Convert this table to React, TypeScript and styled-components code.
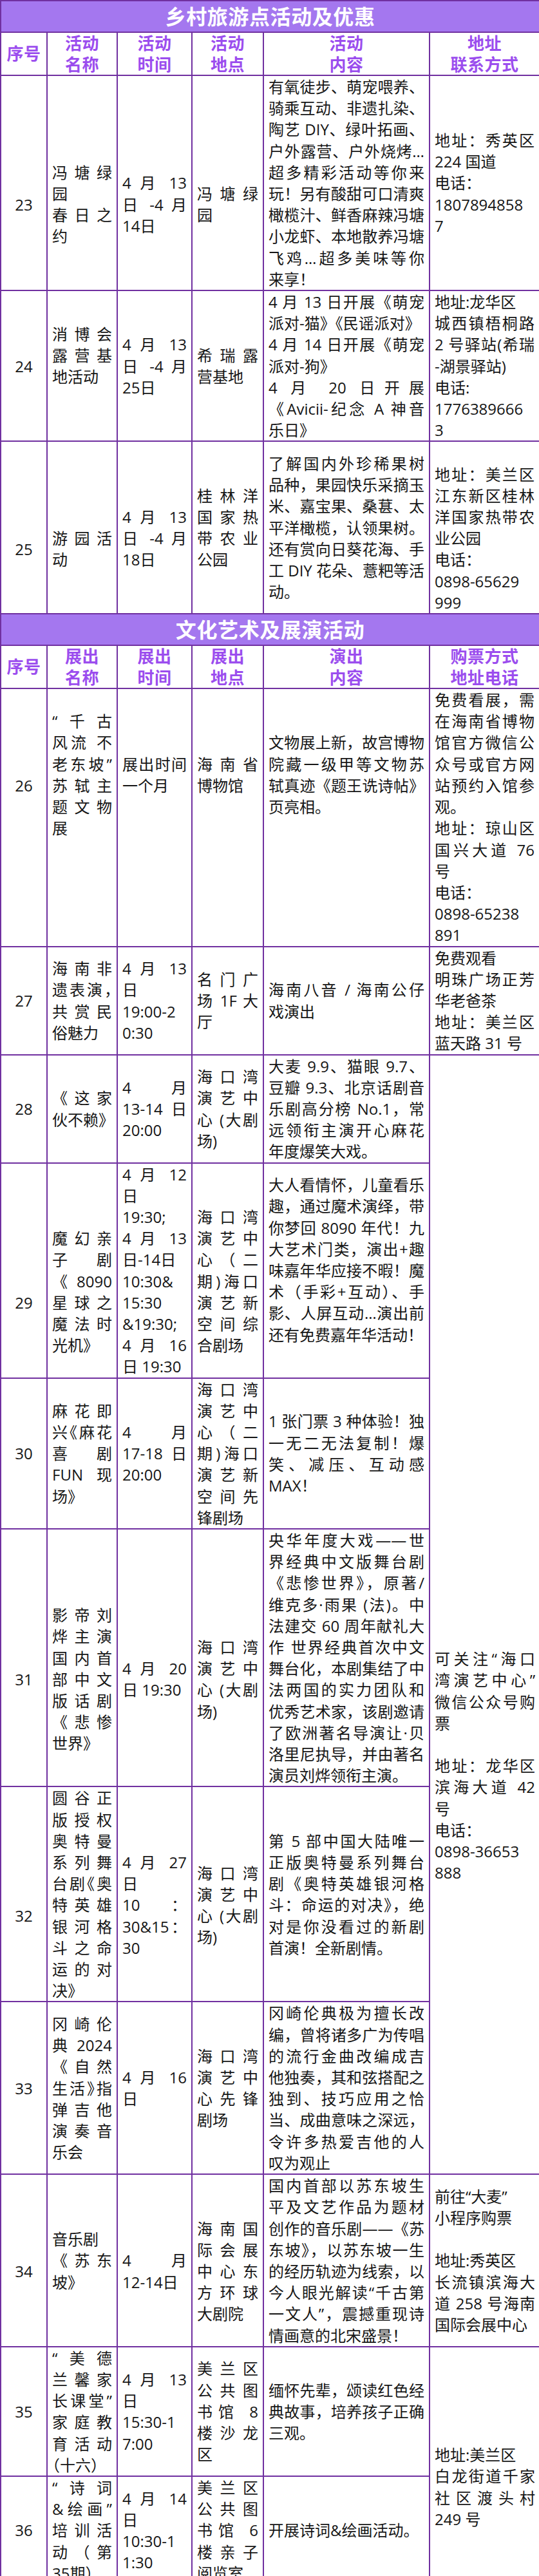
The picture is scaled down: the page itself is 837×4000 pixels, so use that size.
import React from "react";
import styled, { createGlobalStyle } from "styled-components";

// one text line = 33.2px; "\n" starts a new paragraph, "|" is a soft wrap (justified line),
// a leading "~" squeezes the punctuation of that line to half width
const LINE = 33.2;
const COLS = [72, 109, 116, 111, 258, 171];

type CellData = { text: string; span?: number; openRight?: boolean; openTop?: boolean };
type RowData = (string | CellData)[];

const GlobalStyle = createGlobalStyle`
  html, body {
    margin: 0;
    padding: 0;
    background: #fff;
  }
  body {
    font-family: "Open Sans", "Noto Sans CJK SC", sans-serif;
    color: #161616;
  }
`;

const Sheet = styled.table`
  width: 837px;
  border-collapse: collapse;
  table-layout: fixed;
  font-size: 24px;
  line-height: ${LINE}px;
`;

const Col = styled.col<{ $w: number }>`
  width: ${(p) => p.$w}px;
`;

const TitleCell = styled.th`
  height: 47px;
  padding: 0;
  background: #a477ef;
  border: 2px solid #7030a0;
  color: #fff;
  font-size: 32px;
  font-weight: 700;
  line-height: 47px;
  letter-spacing: 0.6px;
  text-align: center;
`;

const HeadCell = styled.th`
  padding: 0;
  border: 2px solid #7030a0;
  color: #9b4dee;
  font-size: 26px;
  font-weight: 700;
  line-height: 32.5px;
  letter-spacing: 0.5px;
  text-align: center;
  vertical-align: middle;
`;

const HeadLine = styled.div`
  white-space: nowrap;
`;

const Cell = styled.td<{ $center?: boolean; $openRight?: boolean; $openTop?: boolean }>`
  padding: 0 7px;
  border: 2px solid #7030a0;
  border-right-style: ${(p) => (p.$openRight ? "hidden" : "solid")};
  border-top-style: ${(p) => (p.$openTop ? "hidden" : "solid")};
  text-align: ${(p) => (p.$center ? "center" : "left")};
  vertical-align: middle;
`;

const Line = styled.div<{ $justify: boolean; $tight: boolean }>`
  min-height: ${LINE}px;
  text-align: ${(p) => (p.$justify ? "justify" : "inherit")};
  text-align-last: ${(p) => (p.$justify ? "justify" : "auto")};
  font-feature-settings: ${(p) => (p.$tight ? '"halt"' : "normal")};
`;

const Lines: React.FC<{ text: string }> = ({ text }) => (
  <>
    {text.split("\n").flatMap((para, i) => {
      const parts = para.split("|");
      return parts.map((raw, j) => {
        const tight = raw.startsWith("~");
        const line = tight ? raw.slice(1) : raw;
        return (
          <Line key={`${i}-${j}`} $justify={j < parts.length - 1} $tight={tight}>
            {line || "\u00a0"}
          </Line>
        );
      });
    })}
  </>
);

const ruralHeads = ["序号", "活动\n名称", "活动\n时间", "活动\n地点", "活动\n内容", "地址\n联系方式"];
const cultureHeads = ["序号", "展出\n名称", "展出\n时间", "展出\n地点", "演出\n内容", "购票方式\n地址电话"];

const ruralRows: RowData[] = [
  [
    "\n\n23",
    "\n\n冯塘绿|园\n春日之|约",
    "\n\n4 月 13|日 -4 月|14日",
    "\n\n冯塘绿|园",
    "有氧徒步、萌宠喂养、|骑乘互动、非遗扎染、|陶艺 DIY、绿叶拓画、|户外露营、户外烧烤…|超多精彩活动等你来|玩！另有酸甜可口清爽|橄榄汁、鲜香麻辣冯塘|小龙虾、本地散养冯塘|飞鸡…超多美味等你|来享！",
    "地址：秀英区|224 国道\n电话：\n1807894858|7",
  ],
  [
    "24",
    "消博会|露营基|地活动\n",
    "4 月 13|日 -4 月|25日",
    "希瑞露|营基地",
    "4 月 13 日开展《萌宠|派对-猫》《民谣派对》\n4 月 14 日开展《萌宠|派对-狗》\n4 月 20 日开展|《Avicii-纪念 A 神音|乐日》",
    "地址:龙华区\n城西镇梧桐路|2 号驿站(希瑞|-湖景驿站)\n电话:\n1776389666|3",
  ],
  [
    "\n\n25",
    "\n\n游园活|动",
    "\n4 月 13|日 -4 月|18日",
    "桂林洋|国家热|带农业|公园",
    "了解国内外珍稀果树|品种，果园快乐采摘玉|米、嘉宝果、桑葚、太|平洋橄榄，认领果树。|还有赏向日葵花海、手|工 DIY 花朵、薏粑等活|动。",
    "\n地址：美兰区|江东新区桂林|洋国家热带农|业公园\n电话：\n0898-65629|999",
  ],
];

const cultureRows: RowData[] = [
  [
    "26\n\n\n",
    "“千古|风流 不|老东坡”|苏轼主|题文物|展\n\n\n\n",
    "展出时间|一个月\n\n\n\n",
    "海南省|博物馆\n\n\n\n",
    "文物展上新，故宫博物|院藏一级甲等文物苏|轼真迹《题王诜诗帖》|页亮相。\n\n\n\n",
    "免费看展，需|在海南省博物|馆官方微信公|众号或官方网|站预约入馆参|观。\n地址：琼山区|国兴大道 76|号\n电话：\n0898-65238|891",
  ],
  [
    "27",
    "海南非|~遗表演，|共赏民|俗魅力",
    "4 月 13|日\n19:00-2|0:30",
    "名门广|场 1F 大|厅",
    "海南八音 / 海南公仔|戏演出",
    "免费观看\n明珠广场正芳|华老爸茶\n地址：美兰区|蓝天路 31 号",
  ],
  [
    "28",
    "《这家|伙不赖》",
    "4 月|13-14日|20:00",
    "海口湾|演艺中|心 (大剧|场)",
    "大麦 9.9、猫眼 9.7、|豆瓣 9.3、北京话剧音|乐剧高分榜 No.1，常|远领衔主演开心麻花|年度爆笑大戏。",
    { text: "", span: 3, openRight: true },
  ],
  [
    "\n\n\n29",
    "\n\n魔幻亲|子剧|《8090|星球之|魔法时|光机》",
    "4 月 12|日\n19:30;\n4 月 13|日-14日\n10:30&|15:30\n&19:30;\n4 月 16|日 19:30",
    "\n海口湾|演艺中|心（二|期)海口|演艺新|空间综|合剧场",
    "大人看情怀，儿童看乐|趣，通过魔术演绎，带|你梦回 8090 年代！九|大艺术门类，演出+趣|味嘉年华应接不暇！魔|术（手彩+互动）、手|影、人屏互动…演出前|还有免费嘉年华活动！\n",
  ],
  [
    "30",
    "麻花即|~兴《麻花|喜剧|FUN 现|场》",
    "4 月|17-18日|20:00",
    "海口湾|演艺中|心（二|期)海口|演艺新|空间先|锋剧场",
    "1 张门票 3 种体验！独|一无二无法复制！爆|笑、减压、互动感|MAX！",
  ],
  [
    "\n\n31",
    "\n\n影帝刘|烨主演|国内首|部中文|版话剧|《悲惨|世界》",
    "\n\n4 月 20|日 19:30",
    "\n\n海口湾|演艺中|心 (大剧|场)",
    "央华年度大戏——世|界经典中文版舞台剧|《悲惨世界》，原著/|维克多·雨果 (法)。中|法建交 60 周年献礼大|作 世界经典首次中文|舞台化，本剧集结了中|法两国的实力团队和|优秀艺术家，该剧邀请|了欧洲著名导演让·贝|洛里尼执导，并由著名|演员刘烨领衔主演。",
    {
      text: "可关注“海口|湾演艺中心”|微信公众号购|票\n\n地址：龙华区|滨海大道 42|号\n电话：\n0898-36653|888\n\n\n\n\n\n\n\n",
      span: 3,
      openRight: true,
      openTop: true,
    },
  ],
  [
    "\n\n32",
    "圆谷正|版授权|奥特曼|系列舞|~台剧《奥|特英雄|银河格|斗之命|运的对|决》",
    "\n4 月 27|日\n10 ：|30&15：|30",
    "\n海口湾|演艺中|心 (大剧|场)",
    "第 5 部中国大陆唯一|正版奥特曼系列舞台|剧《奥特英雄银河格|斗：命运的对决》，绝|对是你没看过的新剧|首演！全新剧情。",
  ],
  [
    "33",
    "冈崎伦|典 2024|《自然|~生活》指|弹吉他|演奏音|乐会",
    "4 月 16|日",
    "海口湾|演艺中|心先锋|剧场",
    "冈崎伦典极为擅长改|编，曾将诸多广为传唱|的流行金曲改编成吉|他独奏，其和弦搭配之|独到、技巧应用之恰|当、成曲意味之深远，|令许多热爱吉他的人|叹为观止",
  ],
  [
    "\n34",
    "音乐剧\n《苏东|坡》",
    "\n4 月|12-14日",
    "\n海南国|际会展|中心东|方环球|大剧院",
    "国内首部以苏东坡生|平及文艺作品为题材|创作的音乐剧——《苏|东坡》，以苏东坡一生|的经历轨迹为线索，以|今人眼光解读“千古第|一文人”，震撼重现诗|情画意的北宋盛景！",
    { text: "前往“大麦”\n小程序购票\n\n地址:秀英区\n长流镇滨海大|道 258 号海南|国际会展中心", openRight: true },
  ],
  [
    "35",
    "“美德|兰馨家|长课堂”|家庭教|育活动|~（十六）",
    "4 月 13|日\n15:30-1|7:00",
    "美兰区|公共图|书馆 8|楼沙龙|区",
    "缅怀先辈，颂读红色经|典故事，培养孩子正确|三观。",
    { text: "\n\n地址:美兰区\n白龙街道千家|社区渡头村|249 号", span: 2, openRight: true },
  ],
  [
    "36",
    "“诗词|&绘画”|培训活|动（第|35期）",
    "4 月 14|日\n10:30-1|1:30",
    "美兰区|公共图|书馆 6|楼亲子|阅览室",
    "开展诗词&绘画活动。",
  ],
];

const Section: React.FC<{ title: string; heads: string[]; rows: RowData[] }> = ({ title, heads, rows }) => (
  <tbody>
    <tr>
      <TitleCell colSpan={6}>{title}</TitleCell>
    </tr>
    <tr>
      {heads.map((h, i) => (
        <HeadCell key={i}>
          {h.split("\n").map((part, j) => (
            <HeadLine key={j}>{part}</HeadLine>
          ))}
        </HeadCell>
      ))}
    </tr>
    {rows.map((row, r) => (
      <tr key={r}>
        {row.map((c, i) => {
          const cell: CellData = typeof c === "string" ? { text: c } : c;
          return (
            <Cell
              key={i}
              rowSpan={cell.span}
              $center={i === 0}
              $openRight={cell.openRight}
              $openTop={cell.openTop}
            >
              <Lines text={cell.text} />
            </Cell>
          );
        })}
      </tr>
    ))}
  </tbody>
);

const App: React.FC = () => (
  <>
    <GlobalStyle />
    <Sheet lang="zh-CN">
      <colgroup>
        {COLS.map((w, i) => (
          <Col key={i} $w={w} />
        ))}
      </colgroup>
      <Section title="乡村旅游点活动及优惠" heads={ruralHeads} rows={ruralRows} />
      <Section title="文化艺术及展演活动" heads={cultureHeads} rows={cultureRows} />
    </Sheet>
  </>
);

export default App;
